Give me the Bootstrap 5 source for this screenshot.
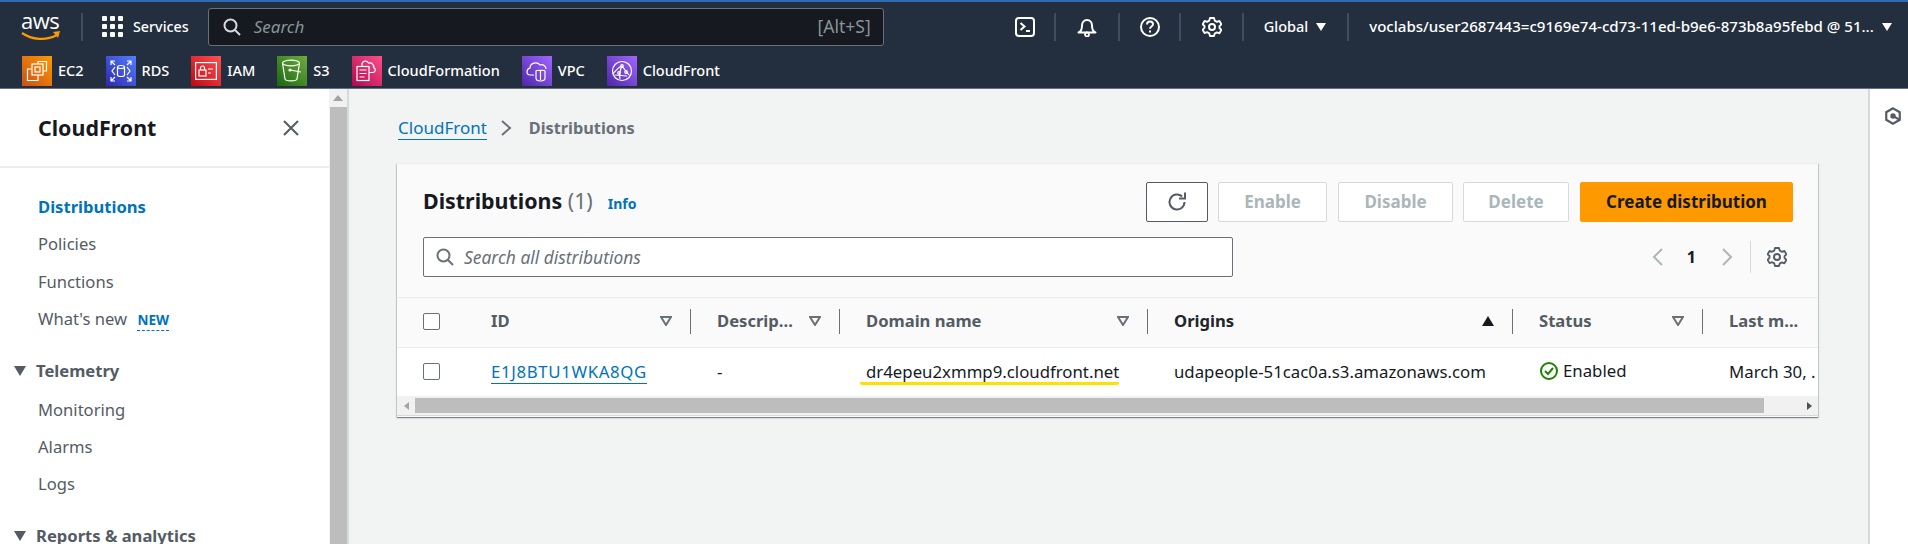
<!DOCTYPE html>
<html lang="en"><head><meta charset="utf-8"><title>CloudFront Distributions</title>
<link href="https://cdn.jsdelivr.net/npm/bootstrap@5.3.0/dist/css/bootstrap.min.css" rel="stylesheet">
<style>
html,body{height:544px;overflow:hidden}
body{font-family:"Noto Sans","Open Sans",sans-serif;font-size:15px;color:#16191f;background:#f2f3f3}
.topnav{height:89px;background:#232f3e;border-top:2px solid #2f6bb5;border-bottom:1px solid #687078;color:#fff;flex:none}
.rowa{height:49px;padding-left:21px;flex:none}
.rowb{height:37px;padding:5px 0 0 22px;gap:22px;font-size:14.5px;font-weight:500;flex:none}
.awsmark{width:38px;height:30px;position:relative;flex:none;margin-top:2px}
.awstext{font-family:"Open Sans",sans-serif;font-size:22px;line-height:22px;letter-spacing:-.5px;display:block;margin-top:-4px}
.awssmile{position:absolute;left:-1px;top:17px}
.navsep{width:2px;height:28px;background:#414d5c;flex:none}
.navsep.lead1{margin-left:22px}
.svcs{font-size:14.3px;font-weight:500;gap:10px;margin:0 19px 0 19px}
.gridic{display:grid;grid-template-columns:repeat(3,5px);gap:3px}
.gridic i{width:5px;height:5px;background:#fff;border-radius:1px;display:block}
.topsearch{width:676px;height:38px;background:#16191f;border:1px solid #687078;border-radius:3px;padding:0 12px 0 14px;flex:none}
.topsearch em{font-size:17px;margin-left:13px;color:#879596}
.topsearch span{font-size:17.5px;color:#879596}
.topright{margin-left:131px;font-size:15.05px;font-weight:500;white-space:nowrap}
.sepa{margin:0 21px 0 19px}.sepb{margin:0 20px 0 21px}.sepc{margin:0 21px 0 19px}.sepd{margin:0 20px 0 20px}
.sepe{margin:0 20px 0 21px}
.glob{font-size:14.5px}
.caret1{margin-left:8px}.caret2{margin-left:8px}
.favic{width:30px;height:30px;display:flex;align-items:center;justify-content:center;flex:none}
.fav{gap:6px}
.g-ec2{background:linear-gradient(45deg,#c8511b,#f90)}
.g-rds{background:linear-gradient(45deg,#2e27ad,#527fff)}
.g-iam{background:linear-gradient(45deg,#bd0816,#ff5252)}
.g-s3{background:linear-gradient(45deg,#1b660f,#6cae3e)}
.g-cf{background:linear-gradient(45deg,#b0084d,#ff4f8b)}
.g-vpc{background:linear-gradient(45deg,#4d27a8,#a166ff)}
.toolic{width:20px;height:20px;flex:none}
.shell{flex:1;min-height:0}
.sidepane{width:329px;background:#fff;flex:none;overflow:hidden}
.sidehead{height:79px;border-bottom:2px solid #eaeded;padding:0 29px 0 38px}
.sidehead h2{font-size:21.4px;font-weight:700;margin:0;color:#16191f}
.sidelist{padding-top:20px;color:#545b64;font-size:16.6px}
.sidelist a{display:block;height:37.4px;line-height:37px;padding-left:38px;color:#545b64;text-decoration:none;white-space:nowrap}
.sidelist a.on{color:#0073bb;font-weight:700}
.newtag{color:#0073bb;font-size:13.500px;font-weight:700;border-bottom:1px dashed #0073bb;margin-left:6px;padding-bottom:1px}
.sidegrp{display:flex;align-items:center;font-weight:700;height:37px;padding-left:14px;gap:10px;white-space:nowrap;color:#545b64;margin:15px 0 1px}
.sideshift{margin-top:15px}
.vbar{width:20px;background:#f1f1f1;flex:none;border-right:2px solid #d5dbdb;padding:0 1px}
.vbar .arr{height:18px;display:flex;align-items:center;justify-content:center}
.vbar .thumb{flex:1;background:#bdbdbd;width:17px}
.mainpane{flex:1;min-width:0;padding:26px 50px 0 48px}
.crumbs{height:26px;font-size:16.3px;color:#687078;font-weight:700;margin-bottom:22px;gap:13px;padding-left:1px}
.crumbs a{color:#0073bb;font-weight:400;font-size:17px;text-decoration:none;border-bottom:1px solid #0073bb;line-height:22px}
.panelbox{background:#fafafa;box-shadow:0 1px 1px 0 rgba(0,28,36,.3),1px 1px 1px 0 rgba(0,28,36,.15),-1px 1px 1px 0 rgba(0,28,36,.15);border-top:1px solid #eaeded;height:254px;overflow:hidden}
.panelhead{padding:18px 25px 0 26px;height:133px}
.ttl{font-size:21.4px;font-weight:700;line-height:28px;white-space:nowrap}
.ttl span{font-weight:400;color:#687078}
.infolink{font-size:14px;font-weight:700;color:#0073bb;text-decoration:none;margin-left:15px}
.actbtn{height:40px;border:1px solid #d5dbdb;border-radius:2px;background:#fff;color:#aab7b8;font-weight:700;font-size:17px;display:flex;align-items:center;justify-content:center;padding:0}
.w-ref{width:62px;border-color:#545b64;margin-right:10px}
.w-en{width:109px;margin-right:11px}
.w-dis{width:115px;margin-right:10px}
.w-del{width:106px;margin-right:11px}
.w-cr{width:213px;background:#f90;border-color:#f90;color:#16191f}
.filt{width:810px;height:40px;border:1px solid #687078;border-radius:2px;background:#fff;padding:0 12px;color:#687078;font-size:17.4px;margin-top:15px}
.filt em{margin-left:10px}
.pager{margin-top:15px;margin-left:auto;font-weight:700;font-size:16px;color:#16191f;height:40px;margin-right:6px}
.pg1{margin:0 25px 0 23px}
.pagesep{width:1px;height:32px;background:#d5dbdb;margin:0 16px 0 17px}
.tblwrap{overflow:hidden;height:99px;border-top:1px solid #eaeded}
.dtbl{table-layout:fixed;width:1500px;border-collapse:collapse;margin:0}
.dtbl th,.dtbl td{padding:0 0 0 25px;vertical-align:middle;white-space:nowrap;overflow:hidden;font-size:16.8px}
.dtbl thead th{height:49px;background:#fafafa;color:#545b64;font-weight:700;border-bottom:1px solid #eaeded;font-size:16.6px}
.dtbl tbody td{height:49px;background:#fff;border:0;color:#16191f}
.c-sel{width:69px}.c-id{width:226px}.c-desc{width:149px}.c-dom{width:308px}.c-org{width:365px}.c-st{width:190px}.c-last{width:193px}
.dtbl th.c0,.dtbl td.c0{padding-left:26px}
.thin{display:flex;align-items:center;justify-content:space-between;height:25px;padding-right:18px;border-right:1px solid #687078;margin:-2px 1px 0 0}
.thin.faint{border-right-color:#eaeded;padding-right:0;width:44px}
.thin.none{border-right:0}
.ckbx{width:17px;height:17px;border:1px solid #687078;border-radius:2px;background:#fff;display:block}
.idlink{color:#0073bb;text-decoration:none;border-bottom:1px solid #0073bb;line-height:22px;display:inline-block;letter-spacing:.65px}
.hilite{border-bottom:3px solid #ffe100;border-radius:2px;padding:0 0 0 6px;margin-left:-6px;line-height:21px;display:inline-block}
.okstat{color:#1d8102}
.okwrap{padding-top:2px}
.hbar{height:20px;background:#f1f1f1;padding:2px 0;border-bottom:1px solid #d5dbdb}
.hbar .thumb2{width:1349px;background:#bdbdbd}
.hbar .ends{width:18px}
.rail{width:40px;background:#fff;border-left:2px solid #d5dbdb;flex:none;padding:18px 0 0 7px}
</style></head>
<body class="d-flex flex-column">
<header class="topnav d-flex flex-column">
  <div class="rowa d-flex align-items-center">
    <div class="awsmark"><span class="awstext">aws</span>
      <svg class="awssmile" width="42" height="12" viewBox="0 0 42 12"><path d="M2 3c10 7 24 8 35 2" fill="none" stroke="#f90" stroke-width="2.2"/><path d="M33 2l7-1-2 7z" fill="#f90"/></svg></div>
    <div class="navsep lead1"></div>
    <div class="svcs d-flex align-items-center">
      <div class="gridic"><i></i><i></i><i></i><i></i><i></i><i></i><i></i><i></i><i></i></div><span>Services</span>
    </div>
    <div class="topsearch d-flex align-items-center">
      <svg width="18" height="18" viewBox="0 0 18 18"><circle cx="7.5" cy="7.5" r="6" fill="none" stroke="#d5dbdb" stroke-width="2"/><path d="M12 12l5 5" stroke="#d5dbdb" stroke-width="2"/></svg>
      <em>Search</em><span class="ms-auto">[Alt+S]</span>
    </div>
    <div class="topright d-flex align-items-center">
      <svg class="toolic" viewBox="0 0 20 20"><rect x="1" y="1" width="18" height="18" rx="3" fill="none" stroke="#fff" stroke-width="2"/><path d="M5.5 6l4 3.5-4 3.5M11 14h4" fill="none" stroke="#fff" stroke-width="2"/></svg>
      <div class="navsep sepa"></div>
      <svg class="toolic" viewBox="0 0 20 20"><path d="M1.5 15.5c3-1 3.5-3 3.5-7 0-3 2-5.500 5-5.500s5 2.500 5 5.500c0 4 .5 6 3.500 7z" fill="none" stroke="#fff" stroke-width="2" stroke-linejoin="round"/><circle cx="10" cy="17.500" r="2" fill="none" stroke="#fff" stroke-width="1.800"/></svg>
      <div class="navsep sepb"></div>
      <svg class="toolic" viewBox="0 0 20 20"><circle cx="10" cy="10" r="9" fill="none" stroke="#fff" stroke-width="2"/><path d="M7 7.500c0-1.800 1.300-3 3-3s3 1.200 3 2.800c0 2.200-3 2.200-3 4.400" fill="none" stroke="#fff" stroke-width="2"/><rect x="9" y="13.500" width="2" height="2" fill="#fff"/></svg>
      <div class="navsep sepc"></div>
      <svg class="toolic" viewBox="0 0 20 20"><path d="M8 1h4l.7 2.600 2.200 1.200 2.500-.9 2 3.400-1.900 1.900v1.800l1.900 1.900-2 3.400-2.500-.9-2.200 1.200L12 19H8l-.7-2.600-2.200-1.200-2.500.9-2-3.400 1.900-1.900V9L.6 7.300l2-3.400 2.500.9 2.200-1.200z" fill="none" stroke="#fff" stroke-width="1.900" stroke-linejoin="round"/><circle cx="10" cy="10" r="3" fill="none" stroke="#fff" stroke-width="2"/></svg>
      <div class="navsep sepd"></div>
      <span class="glob">Global</span>
      <svg class="caret1" width="10" height="8" viewBox="0 0 10 8"><path d="M0 0h10L5 8z" fill="#fff"/></svg>
      <div class="navsep sepe"></div>
      <span class="usr">voclabs/user2687443=c9169e74-cd73-11ed-b9e6-873b8a95febd @ 51...</span>
      <svg class="caret2" width="10" height="8" viewBox="0 0 10 8"><path d="M0 0h10L5 8z" fill="#fff"/></svg>
    </div>
  </div>
  <div class="rowb d-flex align-items-start">
    <div class="fav d-flex align-items-center"><span class="favic g-ec2"><svg width="22" height="22" viewBox="0 0 22 22" fill="none" stroke="#fff" stroke-width="1.200"><path d="M12 4V1.500h8.500V11H17"/><rect x="6" y="4" width="11" height="11"/><rect x="9" y="7" width="5" height="5"/><path d="M6 9H1.500v11.500H12V15"/></svg></span>EC2</div>
    <div class="fav d-flex align-items-center"><span class="favic g-rds"><svg width="24" height="24" viewBox="0 0 24 24" fill="none" stroke="#fff" stroke-width="1.200"><ellipse cx="12" cy="8" rx="3.500" ry="1.500"/><path d="M8.500 8v8c0 2 7 2 7 0V8M6 8l-3 4 3 4M18 8l3 4-3 4M2 6V2h4M2 2l4 4M22 6V2h-4M22 2l-4 4M2 18v4h4M2 22l4-4M22 18v4h-4M22 22l-4-4"/></svg></span>RDS</div>
    <div class="fav d-flex align-items-center"><span class="favic g-iam"><svg width="22" height="18" viewBox="0 0 22 18" fill="none" stroke="#fff" stroke-width="1.200"><rect x=".6" y=".6" width="20.800" height="16.800"/><rect x="4" y="8" width="7" height="6"/><path d="M5.500 8V6a2 2 0 0 1 4 0v2M13 7h5M13 11h3"/></svg></span>IAM</div>
    <div class="fav d-flex align-items-center"><span class="favic g-s3"><svg width="22" height="24" viewBox="0 0 22 24" fill="none" stroke="#fff" stroke-width="1.200"><ellipse cx="10" cy="4" rx="8.500" ry="2.800"/><path d="M1.500 4l2.500 16c.3 2.500 11.700 2.500 12 0l2.500-16M9 11l11 2"/><circle cx="9" cy="11" r="1"/></svg></span>S3</div>
    <div class="fav d-flex align-items-center"><span class="favic g-cf"><svg width="22" height="22" viewBox="0 0 22 22" fill="none" stroke="#fff" stroke-width="1.200"><path d="M6 6.500V3.500C7 1 11 0 12.500 3c3-1 6 2 5 4.500 3 1.500 2 5-1 5H13"/><rect x="1" y="6.500" width="12" height="14"/><path d="M3.500 10h7M3.500 13.500h7M3.500 17h5"/></svg></span>CloudFormation</div>
    <div class="fav d-flex align-items-center"><span class="favic g-vpc"><svg width="22" height="22" viewBox="0 0 22 22" fill="none" stroke="#fff" stroke-width="1.200"><path d="M8 15H4c-4 0-4-6 0-7 0-5 7-7 10-3 3-1 6 1 6 4"/><path d="M10 11c0-1 9-1 9 0v7c0 4-9 4-9 0zM14.500 10v10"/></svg></span>VPC</div>
    <div class="fav d-flex align-items-center"><span class="favic g-vpc"><svg width="22" height="22" viewBox="0 0 22 22" fill="none" stroke="#fff" stroke-width="1.200"><circle cx="11" cy="11" r="9.500"/><path d="M2 14c3-4 6-7 9-8M11 6l7 9M11 6c-2 4-3 8-2 13M4 15l12 1"/><circle cx="11" cy="6" r="1.300"/><circle cx="15" cy="12" r="1.300"/><circle cx="8" cy="13" r="1.300"/></svg></span>CloudFront</div>
  </div>
</header>
<div class="shell d-flex">
  <aside class="sidepane">
    <div class="sidehead d-flex align-items-center justify-content-between">
      <h2>CloudFront</h2>
      <svg width="18" height="18" viewBox="0 0 18 18"><path d="M2 2l14 14M16 2L2 16" stroke="#545b64" stroke-width="2"/></svg>
    </div>
    <nav class="sidelist">
      <a class="on" href="#">Distributions</a><a href="#">Policies</a><a href="#">Functions</a>
      <a href="#">What's new <span class="newtag">NEW</span></a>
      <div class="sidegrp"><svg width="12" height="10" viewBox="0 0 12 10"><path d="M0 0h12L6 10z" fill="#545b64"/></svg>Telemetry</div>
      <a href="#">Monitoring</a><a href="#">Alarms</a><a href="#">Logs</a>
      <div class="sidegrp sideshift"><svg width="12" height="10" viewBox="0 0 12 10"><path d="M0 0h12L6 10z" fill="#545b64"/></svg>Reports &amp; analytics</div>
    </nav>
  </aside>
  <div class="vbar d-flex flex-column">
    <div class="arr"><svg width="10" height="6" viewBox="0 0 10 6"><path d="M0 6h10L5 0z" fill="#a3a3a3"/></svg></div>
    <div class="thumb"></div>
  </div>
  <main class="mainpane">
    <div class="crumbs d-flex align-items-center">
      <a href="#">CloudFront</a>
      <svg width="12" height="18" viewBox="0 0 12 18"><path d="M2 2l8 7-8 7" fill="none" stroke="#687078" stroke-width="2"/></svg>
      <span class="ms-1">Distributions</span>
    </div>
    <section class="panelbox">
      <div class="panelhead">
        <div class="d-flex align-items-center">
          <div class="ttl">Distributions <span>(1)</span><a class="infolink" href="#">Info</a></div>
          <div class="d-flex ms-auto">
            <button class="actbtn w-ref" type="button"><svg width="22" height="22" viewBox="0 0 22 22"><path d="M18.500 11a7.500 7.500 0 1 1-2.400-5.500" fill="none" stroke="#545b64" stroke-width="2"/><path d="M19 1.500V7.500h-6" fill="none" stroke="#545b64" stroke-width="2"/></svg></button>
            <button class="actbtn w-en" type="button">Enable</button>
            <button class="actbtn w-dis" type="button">Disable</button>
            <button class="actbtn w-del" type="button">Delete</button>
            <button class="actbtn w-cr" type="button">Create distribution</button>
          </div>
        </div>
        <div class="d-flex align-items-start">
          <div class="filt d-flex align-items-center">
            <svg width="18" height="18" viewBox="0 0 18 18"><circle cx="7.500" cy="7.500" r="6" fill="none" stroke="#687078" stroke-width="2"/><path d="M12 12l5 5" stroke="#687078" stroke-width="2"/></svg>
            <em>Search all distributions</em>
          </div>
          <div class="pager d-flex align-items-center">
            <svg width="12" height="20" viewBox="0 0 12 20"><path d="M10 2L2 10l8 8" fill="none" stroke="#aab7b8" stroke-width="2"/></svg>
            <span class="pg1">1</span>
            <svg width="12" height="20" viewBox="0 0 12 20"><path d="M2 2l8 8-8 8" fill="none" stroke="#aab7b8" stroke-width="2"/></svg>
            <span class="pagesep"></span>
            <svg width="20" height="20" viewBox="0 0 20 20"><path d="M8 1h4l.7 2.600 2.200 1.200 2.500-.9 2 3.400-1.900 1.900v1.800l1.900 1.900-2 3.400-2.500-.9-2.200 1.200L12 19H8l-.7-2.600-2.200-1.200-2.500.9-2-3.400 1.900-1.900V9L.6 7.300l2-3.400 2.500.9 2.200-1.200z" fill="none" stroke="#545b64" stroke-width="1.800" stroke-linejoin="round"/><circle cx="10" cy="10" r="3" fill="none" stroke="#545b64" stroke-width="2"/></svg>
          </div>
        </div>
      </div>
      <div class="tblwrap">
        <table class="dtbl">
          <colgroup><col class="c-sel"><col class="c-id"><col class="c-desc"><col class="c-dom"><col class="c-org"><col class="c-st"><col class="c-last"></colgroup>
          <thead><tr>
            <th class="c0"><div class="thin faint"><span class="ckbx"></span></div></th>
            <th><div class="thin">ID<svg width="12" height="10" viewBox="0 0 12 10"><path d="M1 1h10L6 9z" fill="none" stroke="#687078" stroke-width="2"/></svg></div></th>
            <th><div class="thin">Descrip...<svg width="12" height="10" viewBox="0 0 12 10"><path d="M1 1h10L6 9z" fill="none" stroke="#687078" stroke-width="2"/></svg></div></th>
            <th><div class="thin">Domain name<svg width="12" height="10" viewBox="0 0 12 10"><path d="M1 1h10L6 9z" fill="none" stroke="#687078" stroke-width="2"/></svg></div></th>
            <th><div class="thin"><span class="text-dark">Origins</span><svg width="12" height="10" viewBox="0 0 12 10"><path d="M0 10h12L6 0z" fill="#16191f"/></svg></div></th>
            <th><div class="thin">Status<svg width="12" height="10" viewBox="0 0 12 10"><path d="M1 1h10L6 9z" fill="none" stroke="#687078" stroke-width="2"/></svg></div></th>
            <th><div class="thin none">Last m...</div></th>
          </tr></thead>
          <tbody><tr>
            <td class="c0"><span class="ckbx"></span></td>
            <td><a class="idlink" href="#">E1J8BTU1WKA8QG</a></td>
            <td>-</td>
            <td><span class="hilite">dr4epeu2xmmp9.cloudfront.net</span></td>
            <td>udapeople-51cac0a.s3.amazonaws.com</td>
            <td class="okstat"><span class="okwrap d-inline-flex align-items-center gap-1"><svg width="20" height="20" viewBox="0 0 20 20"><circle cx="10" cy="10" r="8" fill="none" stroke="#1d8102" stroke-width="2"/><path d="M6 10l3 3 5-6" fill="none" stroke="#1d8102" stroke-width="2"/></svg>Enabled</span></td>
            <td>March 30, .</td>
          </tr></tbody>
        </table>
      </div>
      <div class="hbar d-flex">
        <div class="ends d-flex align-items-center justify-content-center"><svg width="5" height="8" viewBox="0 0 5 8"><path d="M5 0v8L0 4z" fill="#a3a3a3"/></svg></div>
        <div class="thumb2"></div>
        <div class="ms-auto ends d-flex align-items-center justify-content-center"><svg width="5" height="8" viewBox="0 0 5 8"><path d="M0 0v8l5-4z" fill="#505050"/></svg></div>
      </div>
    </section>
  </main>
  <aside class="rail d-flex justify-content-center">
    <svg width="18" height="18" viewBox="0 0 20 20"><path d="M10 1.500l7.500 4.300v8.400L10 18.500l-7.500-4.300V5.800z" fill="none" stroke="#545b64" stroke-width="2.400"/><circle cx="10" cy="10" r="3" fill="#545b64"/><path d="M10 10l7 4" stroke="#545b64" stroke-width="2.400"/></svg>
  </aside>
</div>
</body></html>
